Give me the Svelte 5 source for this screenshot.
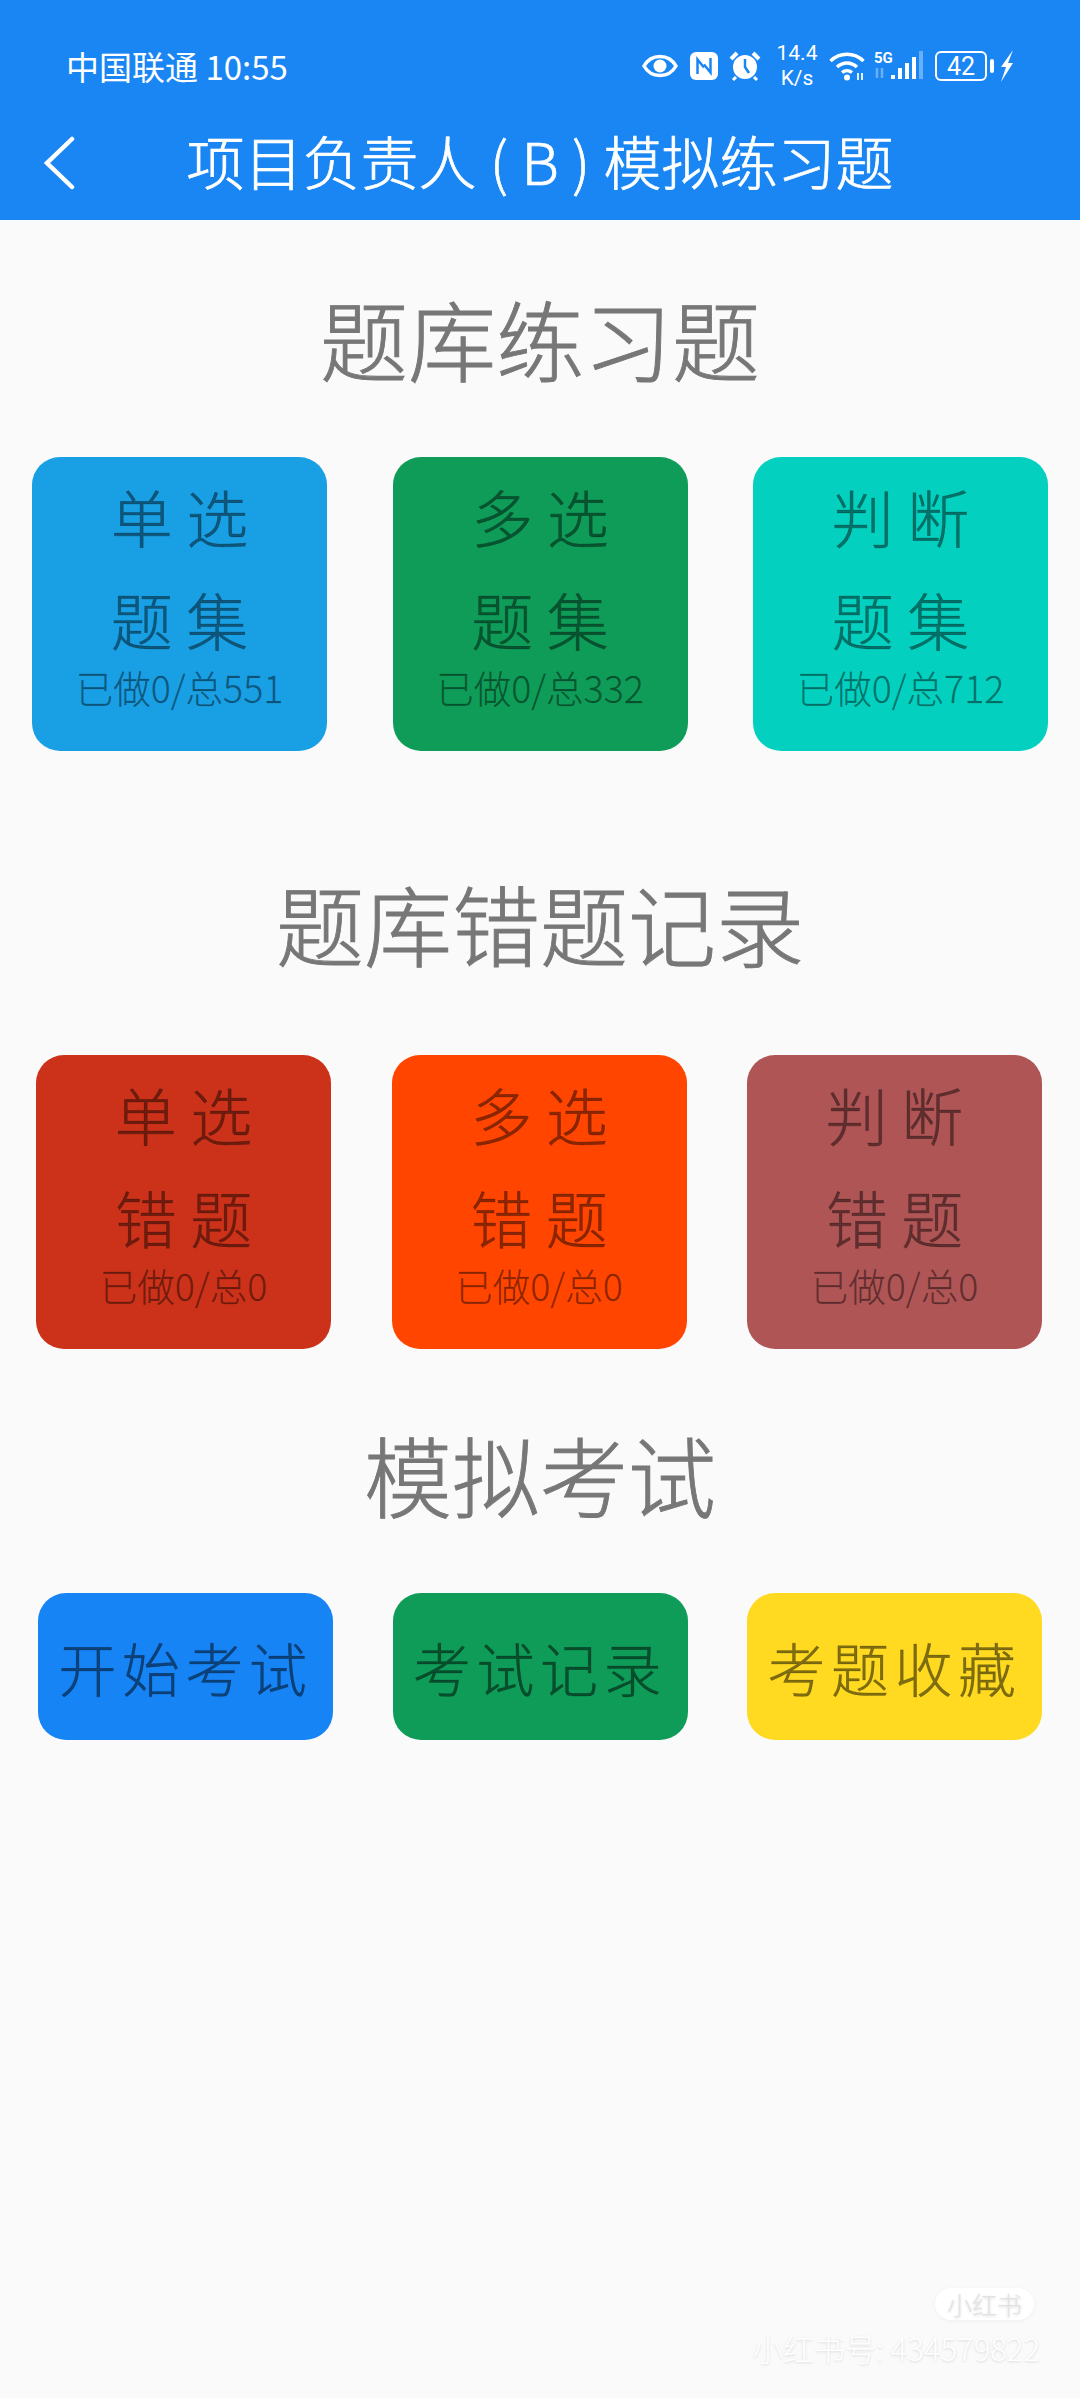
<script>
  const practice = [
    { a: '单 选', b: '题 集', c: '已做0/总551', color: '#199fe3' },
    { a: '多 选', b: '题 集', c: '已做0/总332', color: '#0e9c58' },
    { a: '判 断', b: '题 集', c: '已做0/总712', color: '#04d0bf' }
  ];
  const wrong = [
    { a: '单 选', b: '错 题', c: '已做0/总0', color: '#cb3219' },
    { a: '多 选', b: '错 题', c: '已做0/总0', color: '#ff4500' },
    { a: '判 断', b: '错 题', c: '已做0/总0', color: '#b05555' }
  ];
  const exam = [
    { t: '开始考试', color: '#1784f6' },
    { t: '考试记录', color: '#0e9c58' },
    { t: '考题收藏', color: '#ffda20' }
  ];
</script>

<div class="page">
  <header>
    <div class="status">
      <span class="carrier">中国联通 10:55</span>
      <div class="icons">
        <svg class="eye" width="36" height="24" viewBox="0 0 36 24"><path d="M2 12C6 5 11 2.500 18 2.500S30 5 34 12C30 19 25 21.500 18 21.500S6 19 2 12Z" fill="none" stroke="#fff" stroke-width="3.500"/><circle cx="18" cy="12" r="6.500" fill="#fff"/></svg>
        <svg class="nfc" width="28" height="28" viewBox="0 0 28 28"><rect width="28" height="28" rx="6" fill="#fff"/><path d="M7.500 22V7.500l6.500 8M20.500 6v14.500l-6.500-8" fill="none" stroke="#1a86f4" stroke-width="2.500"/></svg>
        <svg class="alarm" width="32" height="32" viewBox="0 0 32 32"><circle cx="16" cy="17" r="12" fill="#fff"/><path d="M16 9v8l4 6" fill="none" stroke="#1a86f4" stroke-width="2.500"/><path d="M2 9l6-6M30 9l-6-6" stroke="#fff" stroke-width="4"/><path d="M7 27l-3 3M25 27l3 3" stroke="#fff" stroke-width="3"/></svg>
        <div class="speed"><span>14.4</span><span>K/s</span></div>
        <svg class="signal" width="96" height="32" viewBox="0 0 96 32">
          <path d="M1.500 11C11 2 25 2 34.500 11M8 17C14 11.500 22 11.500 28 17M13 22.500C16 20 20 20 23 22.500" fill="none" stroke="#fff" stroke-width="3.500"/>
          <circle cx="18" cy="27.500" r="3" fill="#fff"/>
          <path d="M29 23v7M33 23v7" stroke="#e3f0ff" stroke-width="2"/>
          <text x="45" y="12.500" font-family="Roboto, sans-serif" font-weight="700" font-size="15" fill="#fff">5G</text>
          <path d="M48 18v10M53 18v10" stroke="#fff" stroke-opacity=".35" stroke-width="2.500"/>
          <path d="M64 25v4M71 18v11M78 13v16M85 7v22" stroke="#fff" stroke-width="4"/>
          <path d="M92 1v28" stroke="#fff" stroke-opacity=".35" stroke-width="4"/>
        </svg>
        <div class="battery"><span>42</span></div>
        <div class="nub"></div>
        <svg class="bolt" width="14" height="32" viewBox="0 0 14 32"><path d="M13 0L1 17h5L1 32l12-19H8l5-13Z" fill="#fff"/></svg>
      </div>
    </div>
    <div class="nav">
      <svg class="back" width="32" height="54" viewBox="0 0 32 54"><path d="M29 3L4 27l25 24" fill="none" stroke="#fff" stroke-width="4.500" stroke-linecap="round"/></svg>
      <h1>项目负责人 ( B ) 模拟练习题</h1>
    </div>
  </header>

  <h2 class="t1">题库练习题</h2>
  <div class="row r1">
    {#each practice as c}
      <div class="card" style="background:{c.color}">
        <div class="big">{c.a}</div>
        <div class="big">{c.b}</div>
        <div class="small">{c.c}</div>
      </div>
    {/each}
  </div>

  <h2 class="t2">题库错题记录</h2>
  <div class="row r2">
    {#each wrong as c}
      <div class="card" style="background:{c.color}">
        <div class="big">{c.a}</div>
        <div class="big">{c.b}</div>
        <div class="small">{c.c}</div>
      </div>
    {/each}
  </div>

  <h2 class="t3">模拟考试</h2>
  <div class="row r3">
    {#each exam as e}
      <div class="btn" style="background:{e.color}">{e.t}</div>
    {/each}
  </div>

  <div class="mark">
    <span class="pill">小红书</span>
    <span class="id">小红书号: 434579822</span>
  </div>
</div>

<style>
  :global(body) { margin: 0; background: #fafafa; }
  .page {
    position: relative;
    width: 1080px;
    height: 2398px;
    overflow: hidden;
    background: #fafafa;
    font-family: "Noto Sans CJK SC", "Noto Sans", sans-serif;
    font-weight: 300;
  }
  header { height: 220px; background: #1a86f4; color: #fff; box-sizing: border-box; padding-top: 40px; }
  .status { display: flex; justify-content: space-between; align-items: center; height: 52px; padding: 0 66px; }
  .carrier { font-size: 33px; font-weight: 400; line-height: 52px; }
  .icons { display: flex; align-items: center; }
  .eye { margin-right: 12px; }
  .nfc { margin-right: 11px; }
  .alarm { margin-right: 14px; }
  .speed { width: 44px; display: flex; flex-direction: column; align-items: center; font: 400 21px/25px Roboto, sans-serif; margin-right: 10px; }
  .signal { margin-right: 10px; }
  .battery { box-sizing: border-box; width: 52px; height: 30px; border: 2.500px solid #fff; border-radius: 6px; display: flex; align-items: center; justify-content: center; font: 400 25px/1 Roboto, sans-serif; }
  .nub { width: 4px; height: 14px; background: #fff; border-radius: 2px; margin: 0 6px 0 3px; }
  .nav { position: relative; height: 100px; display: flex; align-items: center; justify-content: center; margin-top: 18px; }
  .back { position: absolute; left: 43px; top: 26px; }
  h1 { margin: 0; font-size: 58px; font-weight: 300; line-height: 100px; white-space: nowrap; word-spacing: 0.500px; -webkit-text-stroke: .7px #fff; }
  h2 { margin: 0; text-align: center; font-size: 88px; font-weight: 300; line-height: 100px; color: #777; -webkit-text-stroke: .9px #777; }
  .t1 { margin-top: 67px; }
  .t2 { margin-top: 121px; }
  .t3 { margin-top: 74px; }
  .row { display: flex; }
  .r1 { margin-top: 70px; padding: 0 32px; justify-content: space-between; }
  .r2 { margin-top: 83px; padding: 0 38px 0 36px; justify-content: space-between; }
  .r3 { margin-top: 70px; padding: 0 38px; justify-content: space-between; }
  .card { width: 295px; height: 294px; border-radius: 28px; display: flex; flex-direction: column; align-items: center; padding-top: 8px; box-sizing: border-box; color: rgba(0, 0, 0, .45); }
  .big { font-size: 62px; line-height: 103px; white-space: pre; -webkit-text-stroke: .6px rgba(0, 0, 0, .3); }
  .small { font-size: 37.500px; line-height: 46px; margin-top: -7px; white-space: nowrap; -webkit-text-stroke: .3px rgba(0, 0, 0, .3); }
  .btn { width: 295px; height: 147px; border-radius: 28px; display: flex; align-items: center; justify-content: center; color: rgba(0, 0, 0, .5); font-size: 58px; letter-spacing: 5.500px; white-space: nowrap; -webkit-text-stroke: .6px rgba(0, 0, 0, .3); }
  .mark { position: absolute; right: 40px; top: 2288px; display: flex; flex-direction: column; align-items: flex-end; color: #fff; text-shadow: 0 1px 3px rgba(0,0,0,.14); }
  .pill { font-size: 25px; line-height: 32px; padding: 0 12px; border-radius: 16px; margin-right: 6px; color: #e2e2e2; background: #fff; box-shadow: 0 1px 4px rgba(0,0,0,.05); }
  .id { font-size: 31px; line-height: 40px; margin-top: 8px; }
</style>
